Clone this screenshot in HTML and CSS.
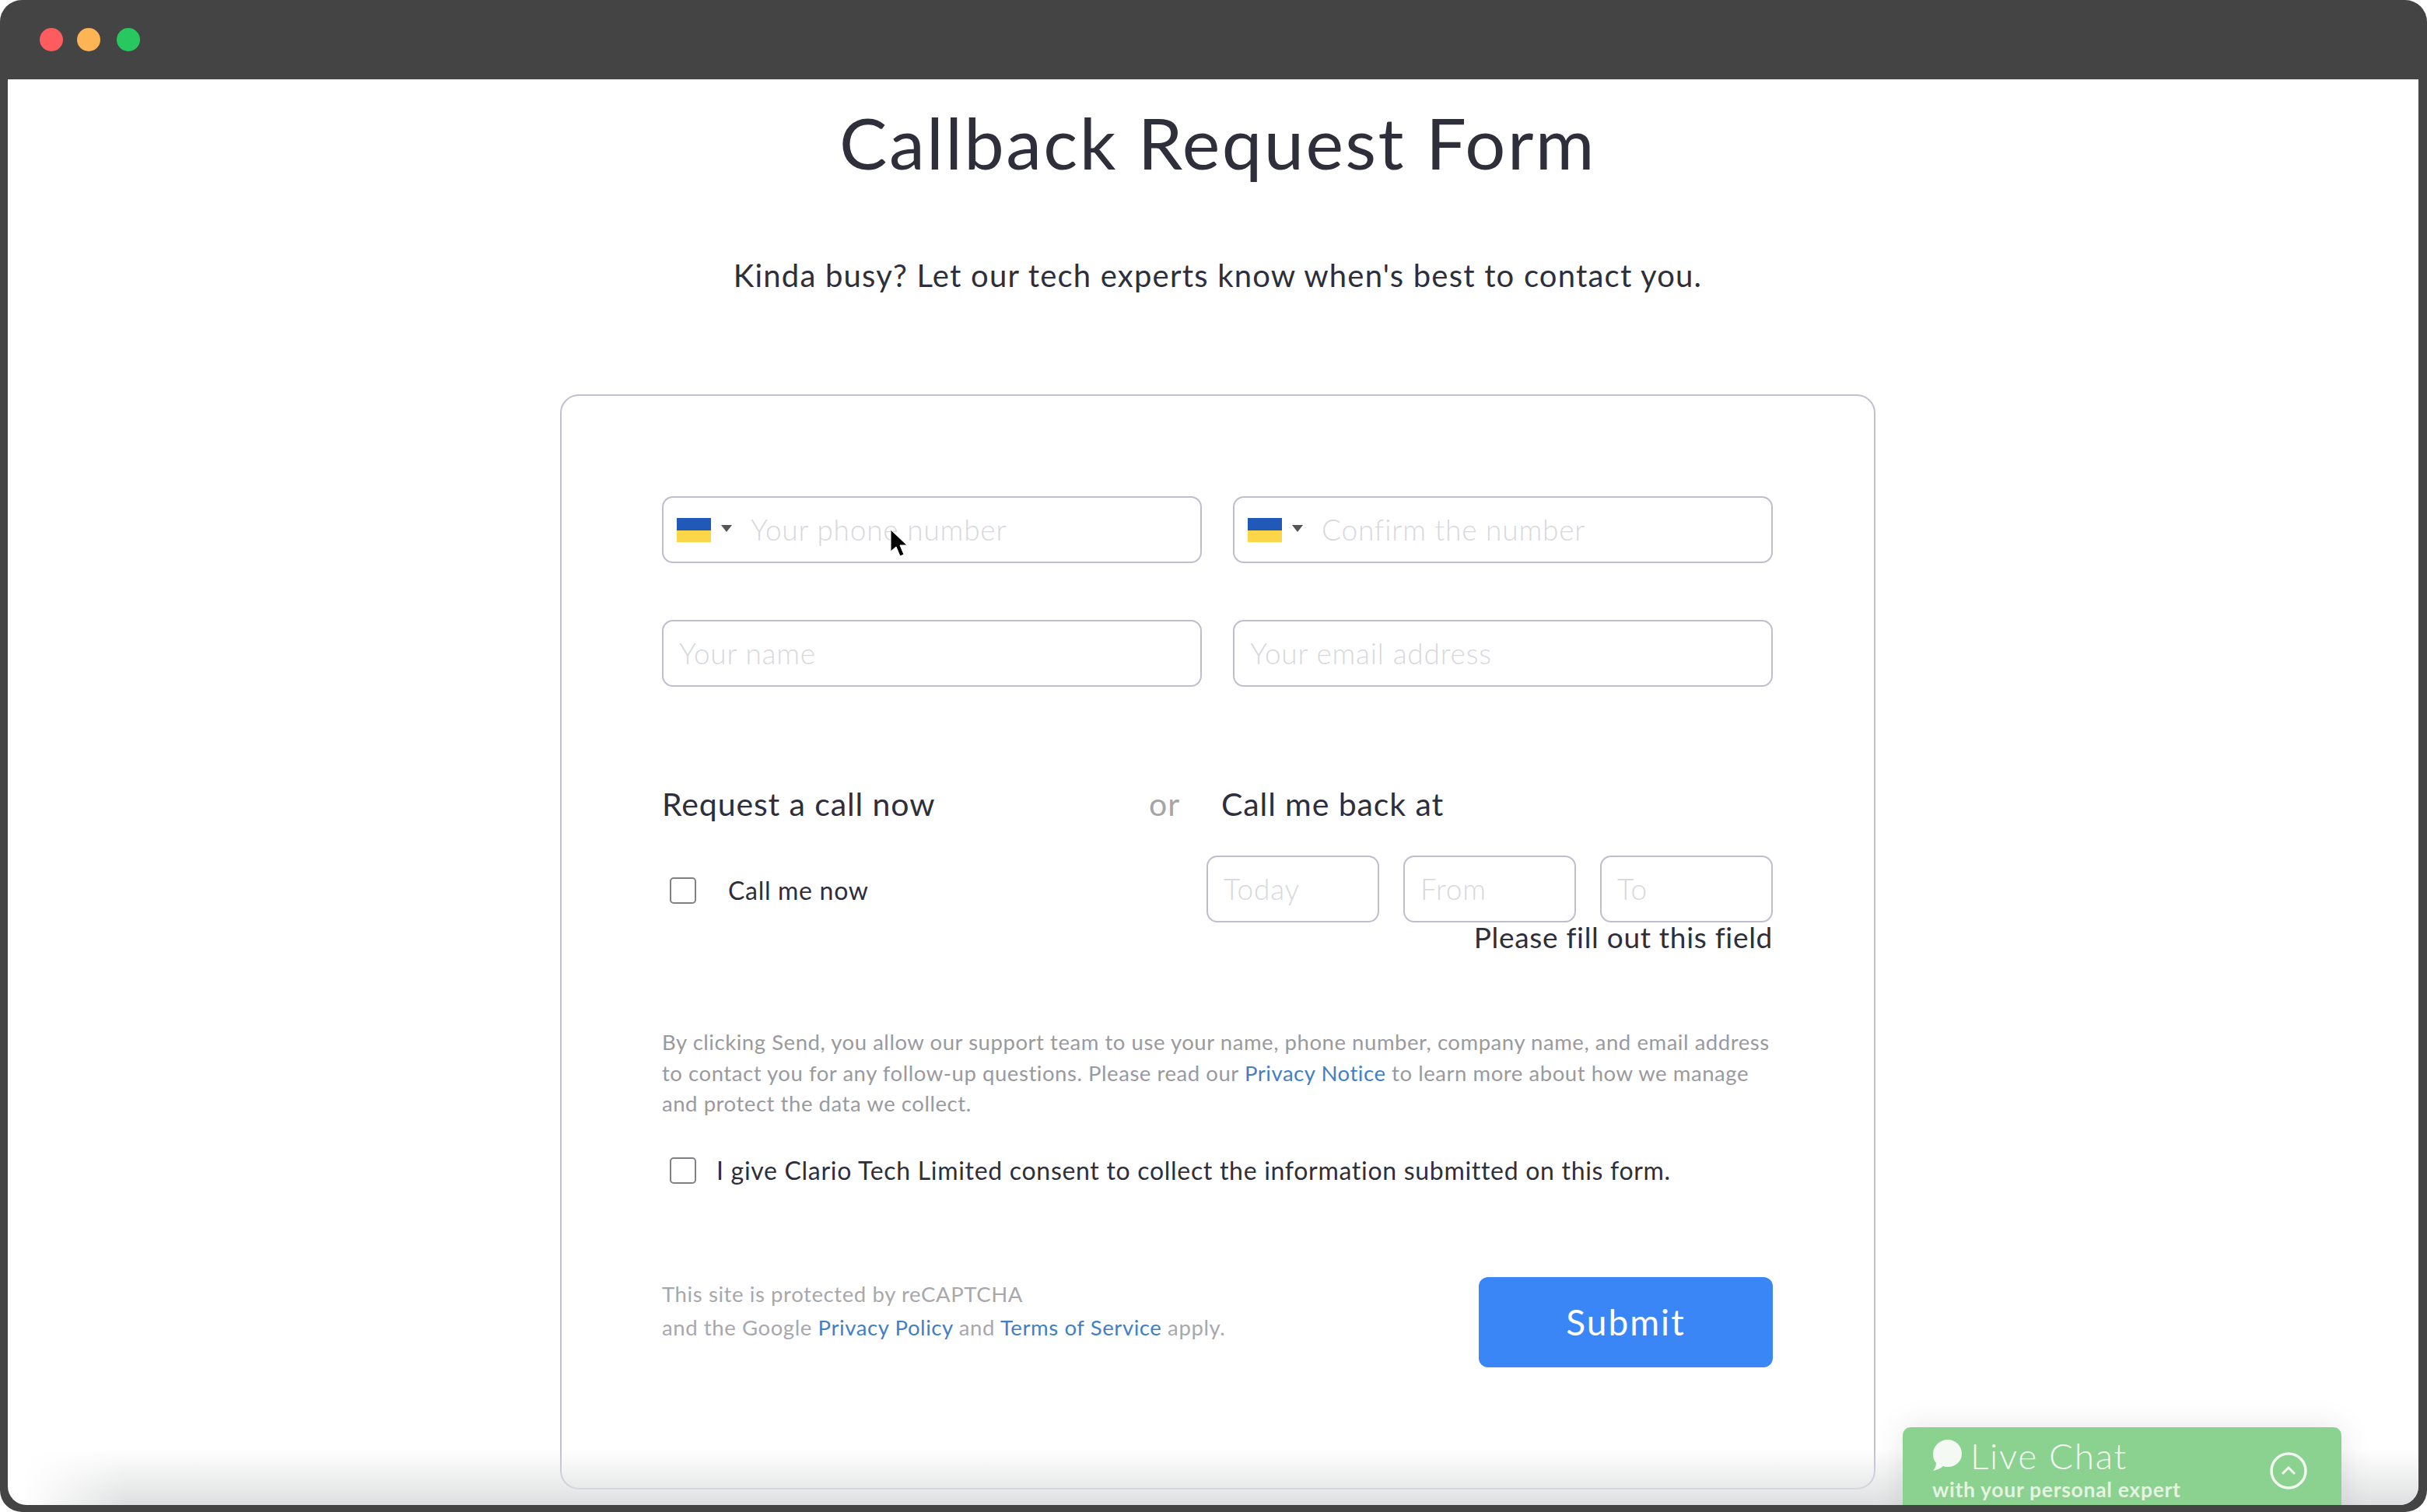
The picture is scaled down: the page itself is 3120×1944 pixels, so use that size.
FILE: index.html
```html
<!DOCTYPE html>
<html lang="en">
<head>
    <meta charset="UTF-8">
    <title>Callback Request Form</title>
    <link rel="stylesheet" href="styles.css">
</head>
<body>
<div class="window">
    <div class="titlebar">
        <span class="dot red"></span>
        <span class="dot yellow"></span>
        <span class="dot green"></span>
    </div>
    <div class="page">
        <h1>Callback Request Form</h1>
        <p class="sub">Kinda busy? Let our tech experts know when's best to contact you.</p>

        <form class="card">
            <div class="fields">
                <div class="field">
                    <span class="flag"></span>
                    <span class="caret"></span>
                    <input type="text" placeholder="Your phone number">
                </div>
                <div class="field">
                    <span class="flag"></span>
                    <span class="caret"></span>
                    <input type="text" placeholder="Confirm the number">
                </div>
                <div class="field plain"><input type="text" placeholder="Your name"></div>
                <div class="field plain"><input type="text" placeholder="Your email address"></div>
            </div>

            <div class="call-head">
                <span class="call-now">Request a call now</span>
                <span class="or">or</span>
                <span>Call me back at</span>
            </div>

            <div class="call-row">
                <label class="check call-check"><input type="checkbox"> Call me now</label>
                <div class="times">
                    <div class="field plain time"><input type="text" placeholder="Today"></div>
                    <div class="field plain time"><input type="text" placeholder="From"></div>
                    <div class="field plain time"><input type="text" placeholder="To"></div>
                </div>
            </div>
            <div class="error">Please fill out this field</div>

            <p class="legal">By clicking Send, you allow our support team to use your name, phone number, company name, and email address to contact you for any follow-up questions. Please read our <a href="#">Privacy Notice</a> to learn more about how we manage and protect the data we collect.</p>

            <label class="check consent"><input type="checkbox"> I give Clario Tech Limited consent to collect the information submitted on this form.</label>

            <div class="footer">
                <p class="recaptcha">This site is protected by reCAPTCHA<br>and the Google <a href="#">Privacy Policy</a> and <a href="#">Terms of Service</a> apply.</p>
                <button type="button" class="submit">Submit</button>
            </div>
        </form>

        <div class="fade"></div>

        <div class="chat">
            <div class="chat-text">
                <div class="chat-title">
                    <svg width="38" height="40" viewBox="0 0 38 40"><path d="M20 0C30 0 38 8 38 18C38 28 30 35 20 35C18 35 16 35 14 34C11 37 6 39 1 40C4 37 5 33 5 30C2 27 1 23 1 18C1 8 10 0 20 0Z" fill="#f4faf3"/></svg>
                    Live Chat
                </div>
                <div class="chat-sub">with your personal expert</div>
            </div>
            <svg class="chat-arrow" width="48" height="48" viewBox="0 0 48 48" fill="none" stroke="#f1f9f0"><circle cx="24" cy="24" r="22" stroke-width="3.5"/><path d="M16 28L24 20L32 28" stroke-width="3"/></svg>
        </div>

        <svg class="cursor" width="24" height="38" viewBox="0 0 24 38"><path d="M1 1V29L8 23L13 35L18 33L13 21H22Z" fill="#000" stroke="#fff" stroke-width="1"/></svg>
    </div>
</div>
</body>
</html>
```

FILE: styles.css
```css
* {
    box-sizing: border-box;
}
html, body {
    margin: 0;
    height: 100%;
    background-color: #fff;
}
body {
    font-family: "Lato", "Liberation Sans", sans-serif;
    color: #2e2f3a;
}
.window {
    height: 1944px;
    background-color: #444;
    border-radius: 28px;
    padding: 0 11px 9px 10px;
    display: flex;
    flex-direction: column;
    overflow: hidden;
}
.titlebar {
    height: 102px;
    flex: none;
    display: flex;
    align-items: center;
    padding-left: 41px;
}
.dot {
    width: 30px;
    height: 30px;
    border-radius: 50%;
    margin-right: 18px;
}
.red { background-color: #fe5c5f; }
.yellow { background-color: #fdb454; }
.green { background-color: #29c75f; margin-left: 3px; }

.page {
    flex: 1;
    position: relative;
    overflow: hidden;
    background-color: #fff;
    border-radius: 0 0 24px 24px;
    padding: 31px 0 0 12px;
}
h1 {
    margin: 0;
    font-size: 92px;
    font-weight: 400;
    line-height: 100px;
    letter-spacing: 2.4px;
    text-align: center;
}
.sub {
    margin: 101px 0 0;
    font-size: 40px;
    line-height: 40px;
    letter-spacing: 1.2px;
    text-align: center;
}
.card {
    width: 1691px;
    height: 1408px;
    margin: 133px auto 0;
    padding: 129px 130px 0 129px;
    border: 2px solid #c0c0d0;
    border-radius: 24px;
}
.fields {
    display: grid;
    grid-template-columns: 1fr 1fr;
    gap: 73px 40px;
}
.field {
    height: 86px;
    display: flex;
    align-items: center;
    padding-left: 17px;
    border: 2px solid #bebece;
    border-radius: 14px;
}
.field.plain {
    padding-left: 20px;
}
.field input {
    flex: 1;
    min-width: 0;
    border: none;
    outline: none;
    padding: 0 0 2px;
    font-family: inherit;
    font-size: 37px;
    font-weight: 300;
    letter-spacing: 0.8px;
    background: transparent;
}
.field input::placeholder {
    color: #d8d8dc;
    opacity: 1;
}
.flag {
    width: 44px;
    height: 31px;
    flex: none;
    background: linear-gradient(#2059b8 50%, #fad648 50%);
}
.caret {
    width: 0;
    height: 0;
    margin: -4px 24px 0 13px;
    border-left: 7px solid transparent;
    border-right: 7px solid transparent;
    border-top: 9px solid #555;
}
.call-head {
    display: flex;
    margin-top: 131px;
    font-size: 41px;
    line-height: 40px;
    letter-spacing: 0.9px;
}
.call-now {
    width: 626px;
}
.or {
    width: 93px;
    color: #a5a5a8;
}
.call-row {
    display: flex;
    align-items: center;
    justify-content: space-between;
    margin-top: 46px;
}
.check {
    display: flex;
    align-items: center;
    padding-left: 10px;
    font-size: 32px;
    line-height: 40px;
    letter-spacing: 0.7px;
}
.check input {
    appearance: none;
    width: 34px;
    height: 34px;
    flex: none;
    margin: 0;
    border: 2px solid #808085;
    border-radius: 5px;
}
.call-check {
    margin-top: 3px;
}
.call-check input {
    margin-right: 41px;
}
.consent input {
    margin-right: 26px;
}
.times {
    display: flex;
    gap: 31px;
}
.time {
    width: 222px;
}
.error {
    font-size: 37px;
    line-height: 38px;
    letter-spacing: 0.7px;
    text-align: right;
}
.legal {
    margin: 96px 0 0;
    font-size: 27.5px;
    line-height: 39.5px;
    letter-spacing: 0.55px;
    color: #9a9a9e;
}
a {
    color: #3f80c8;
    text-decoration: none;
}
.consent {
    margin-top: 46px;
}
.footer {
    display: flex;
    justify-content: space-between;
    margin-top: 117px;
}
.recaptcha {
    margin: 0;
    font-size: 27.5px;
    line-height: 43px;
    letter-spacing: 0.6px;
    color: #a8a8ac;
}
.submit {
    width: 378px;
    height: 116px;
    border: none;
    border-radius: 12px;
    background-color: #3a86f6;
    color: #fff;
    font-family: inherit;
    font-size: 46px;
    letter-spacing: 2px;
}
/* grey shade along the bottom of the window */
.fade {
    position: absolute;
    left: 0;
    right: 0;
    bottom: 0;
    height: 72px;
    background: linear-gradient(rgba(222, 223, 224, 0), #dfe0e1);
    -webkit-mask-image: linear-gradient(to right, transparent 20px, #000 150px);
    mask-image: linear-gradient(to right, transparent 20px, #000 150px);
    pointer-events: none;
}
.chat {
    position: absolute;
    left: 2436px;
    top: 1733px;
    width: 564px;
    height: 120px;
    display: flex;
    justify-content: space-between;
    padding: 14px 44px 0 38px;
    border-radius: 10px 10px 0 0;
    background-color: #8bd18f;
    box-shadow: 0 0 40px rgba(0, 0, 0, 0.1);
    color: #f4faf3;
}
.chat-title {
    display: flex;
    align-items: center;
    gap: 11px;
    height: 44px;
    font-size: 46px;
    font-weight: 300;
    letter-spacing: 1.7px;
}
.chat-sub {
    margin-top: 7px;
    font-size: 26.5px;
    line-height: 30px;
    font-weight: 700;
    letter-spacing: 0.7px;
    color: #e4f3e2;
}
.chat-arrow {
    margin-top: 18px;
}
.cursor {
    position: absolute;
    left: 1134px;
    top: 578px;
}
```
